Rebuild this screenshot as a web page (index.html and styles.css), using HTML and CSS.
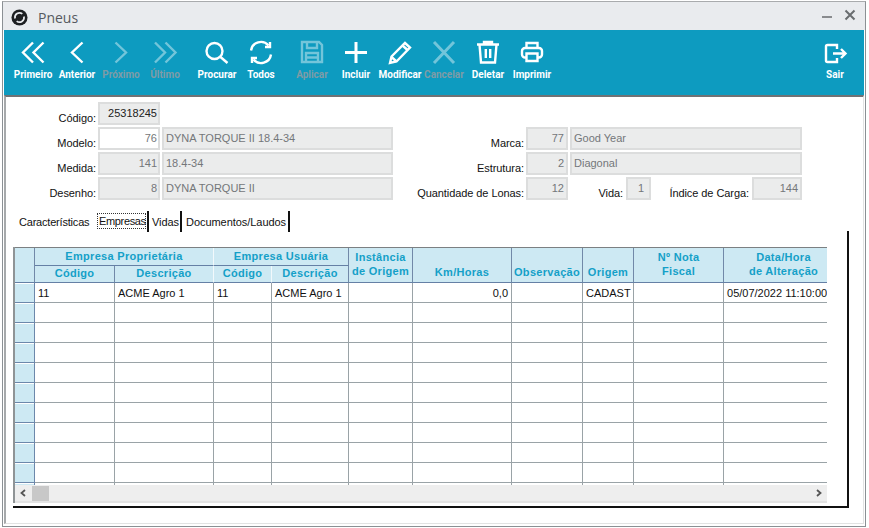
FILE: index.html
```html
<!DOCTYPE html>
<html lang="pt">
<head>
<meta charset="utf-8">
<title>Pneus</title>
<link rel="stylesheet" href="styles.css">
</head>
<body>
<div class="window">
  <header class="titlebar">
    <svg class="logo" viewBox="0 0 18 18"><circle cx="9" cy="9" r="8.5" fill="#1d1f22"/><path d="M4.300 10a4.800 4.800 0 0 1 7.700-4.800" fill="none" stroke="#e9ebee" stroke-width="1.800"/><path d="M13.700 8a4.800 4.800 0 0 1-7.700 4.800" fill="none" stroke="#e9ebee" stroke-width="1.800"/></svg>
    <span class="title">Pneus</span>
    <span class="winbtns">
      <svg class="winbtn" viewBox="0 0 12 12"><path d="M1 8h10" stroke="#707375" stroke-width="1.600"/></svg>
      <svg class="winbtn" viewBox="0 0 12 12"><path d="M1.500 1.500l9 9M10.500 1.500l-9 9" stroke="#6a6d70" stroke-width="2"/></svg>
    </span>
  </header>

  <nav class="toolbar">
    <div class="tool"><svg viewBox="0 0 24 24"><path d="M12 2.500L2 12.500l10 10M22.500 2.500l-10 10 10 10"/></svg><span>Primeiro</span></div>
    <div class="tool"><svg viewBox="0 0 24 24"><path d="M17.500 2.500L7 12.500l10.500 10"/></svg><span>Anterior</span></div>
    <div class="tool off"><svg viewBox="0 0 24 24"><path d="M6.500 2.500L17 12.500l-10.500 10"/></svg><span>Próximo</span></div>
    <div class="tool off gap-r"><svg viewBox="0 0 24 24"><path d="M2 2.500l10 10-10 10M12.500 2.500l10 10-10 10"/></svg><span>Último</span></div>
    <div class="tool"><svg viewBox="0 0 24 24"><circle cx="9.500" cy="11" r="8"/><path d="M15.500 17l7 6"/></svg><span>Procurar</span></div>
    <div class="tool gap-r2"><svg viewBox="0 0 24 24"><path d="M2 10.500a10 10 0 0 1 17.500-5M22 14.500a10 10 0 0 1-17.500 5"/><path d="M21 2v5h-5M3 23v-5h5"/></svg><span>Todos</span></div>
    <div class="tool off"><svg viewBox="0 0 24 24"><path d="M2 2h17l3 3v17H2z"/><path d="M7 2v6h10V2M6 22v-9h12v9M6 17.500h12"/></svg><span>Aplicar</span></div>
    <div class="tool"><svg viewBox="0 0 24 24"><path class="thick" d="M12 2v21M1 12.500h22"/></svg><span>Incluir</span></div>
    <div class="tool"><svg viewBox="0 0 24 24"><path d="M2 23l1.500-6.500L17 3l5 4.500L8.500 21.500z"/><path d="M14.500 5.500l5 4.500M3.500 17l5 4.500"/></svg><span>Modificar</span></div>
    <div class="tool off"><svg viewBox="0 0 24 24"><path class="thick" d="M2 2l20 21M22 2L2 23"/></svg><span>Cancelar</span></div>
    <div class="tool"><svg viewBox="0 0 24 24"><path d="M1 4.500h22M8 4.500V2h8v2.500M3.500 4.500l1.500 18h14l1.500-18"/><path d="M9.800 9v9M14.200 9v9"/></svg><span>Deletar</span></div>
    <div class="tool"><svg viewBox="0 0 24 24"><path d="M6.500 8V3h11v5"/><path d="M6.500 17.500H5a3 3 0 0 1-3-3V11a3 3 0 0 1 3-3h14a3 3 0 0 1 3 3v3.500a3 3 0 0 1-3 3h-1.500"/><path d="M6.500 13.500h11v7.500h-11z"/></svg><span>Imprimir</span></div>
    <div class="tool end"><svg viewBox="0 0 24 24"><path d="M14 9V5H4.500a1.500 1.500 0 0 0-1.500 1.500v14A1.500 1.500 0 0 0 4.500 22H14v-4"/><path d="M10 13.500h12M18 9l4.500 4.500L18 18"/></svg><span>Sair</span></div>
  </nav>

  <main class="content">
    <section class="form">
      <div class="formcol">
        <div class="row"><label class="lbl lbl-left">Código:</label><div class="fld code dark">25318245</div></div>
        <div class="row"><label class="lbl lbl-left">Modelo:</label><div class="fld code on">76</div><div class="fld name">DYNA TORQUE II 18.4-34</div></div>
        <div class="row"><label class="lbl lbl-left">Medida:</label><div class="fld code">141</div><div class="fld name">18.4-34</div></div>
        <div class="row"><label class="lbl lbl-left">Desenho:</label><div class="fld code">8</div><div class="fld name">DYNA TORQUE II</div></div>
      </div>
      <div class="formcol right">
        <div class="row"><label class="lbl lbl-right">Marca:</label><div class="fld code2">77</div><div class="fld name2">Good Year</div></div>
        <div class="row"><label class="lbl lbl-right">Estrutura:</label><div class="fld code2">2</div><div class="fld name2">Diagonal</div></div>
        <div class="row"><label class="lbl lbl-right">Quantidade de Lonas:</label><div class="fld code2">12</div><label class="lbl lbl-vida">Vida:</label><div class="fld vida">1</div><label class="lbl lbl-carga">Índice de Carga:</label><div class="fld carga">144</div></div>
      </div>
    </section>

    <div class="tabs">
      <span class="tab tab-first">Características</span>
      <span class="tab tab-active"><span class="focus">Empresas</span></span>
      <span class="tab tab-vidas">Vidas</span>
      <span class="tab tab-docs">Documentos/Laudos</span>
    </div>

    <section class="panel">
      <div class="grid">
        <div class="viewport">
          <table>
            <colgroup>
              <col class="c0"><col class="c1"><col class="c2"><col class="c3"><col class="c4"><col class="c5"><col class="c6"><col class="c7"><col class="c8"><col class="c9"><col class="c10">
            </colgroup>
            <thead>
              <tr class="h1">
                <th rowspan="2" class="hd-corner"></th>
                <th colspan="2" class="soft">Empresa Proprietária</th>
                <th colspan="2">Empresa Usuária</th>
                <th rowspan="2" class="two">Instância<br>de Origem</th>
                <th rowspan="2" class="low">Km/Horas</th>
                <th rowspan="2" class="low">Observação</th>
                <th rowspan="2" class="low">Origem</th>
                <th rowspan="2" class="two">Nº Nota<br>Fiscal</th>
                <th rowspan="2" class="two">Data/Hora<br>de Alteração</th>
              </tr>
              <tr class="h2">
                <th>Código</th><th class="soft">Descrição</th><th class="soft">Código</th><th>Descrição</th>
              </tr>
            </thead>
            <tbody>
              <tr><th></th><td>11</td><td>ACME Agro 1</td><td>11</td><td>ACME Agro 1</td><td></td><td class="num">0,0</td><td></td><td>CADAST</td><td></td><td>05/07/2022 11:10:00</td></tr>
              <tr><th></th><td></td><td></td><td></td><td></td><td></td><td></td><td></td><td></td><td></td><td></td></tr>
              <tr><th></th><td></td><td></td><td></td><td></td><td></td><td></td><td></td><td></td><td></td><td></td></tr>
              <tr><th></th><td></td><td></td><td></td><td></td><td></td><td></td><td></td><td></td><td></td><td></td></tr>
              <tr><th></th><td></td><td></td><td></td><td></td><td></td><td></td><td></td><td></td><td></td><td></td></tr>
              <tr><th></th><td></td><td></td><td></td><td></td><td></td><td></td><td></td><td></td><td></td><td></td></tr>
              <tr><th></th><td></td><td></td><td></td><td></td><td></td><td></td><td></td><td></td><td></td><td></td></tr>
              <tr><th></th><td></td><td></td><td></td><td></td><td></td><td></td><td></td><td></td><td></td><td></td></tr>
              <tr><th></th><td></td><td></td><td></td><td></td><td></td><td></td><td></td><td></td><td></td><td></td></tr>
              <tr><th></th><td></td><td></td><td></td><td></td><td></td><td></td><td></td><td></td><td></td><td></td></tr>
              <tr><th></th><td></td><td></td><td></td><td></td><td></td><td></td><td></td><td></td><td></td><td></td></tr>
            </tbody>
          </table>
        </div>
        <div class="hscroll">
          <svg class="arrow" viewBox="0 0 8 8"><path d="M6 1L2.500 4 6 7" fill="none" stroke="#555" stroke-width="1.800"/></svg>
          <span class="thumb"></span>
          <svg class="arrow arrow-r" viewBox="0 0 8 8"><path d="M2 1l3.500 3L2 7" fill="none" stroke="#555" stroke-width="1.800"/></svg>
        </div>
      </div>
    </section>
  </main>
</div>
</body>
</html>
```

FILE: styles.css
```css
* { box-sizing: border-box; }
html, body { margin: 0; padding: 0; background: #fff; }
body { width: 869px; height: 528px; overflow: hidden; padding: 1px 3px 1px 2px; }
.window {
  width: 864px; height: 526px;
  border: 1px solid #8b9094;
  border-top-color: #a9abad;
  display: flex; flex-direction: column;
  background: #fff;
  padding-bottom: 2px;
}
.titlebar {
  height: 28px; flex: none;
  background: #e9ebee;
  display: flex; align-items: center;
  padding-left: 8px; padding-right: 9px;
}
.logo { width: 17px; height: 17px; margin-top: 2px; }
.title { font: 14px "Open Sans", sans-serif; color: #555a60; margin-left: 10px; margin-top: 3px; }
.winbtns { margin-left: auto; display: flex; gap: 11px; margin-top: -2px; }
.winbtn { width: 12px; height: 12px; }

.toolbar {
  height: 65px; flex: none;
  margin-left: 1px; margin-right: 1px;
  background: #0d9bc0;
  display: flex;
  padding: 10px 7px 0 7px;
}
.tool { width: 44px; display: flex; flex-direction: column; align-items: center; }
.tool svg { width: 24px; height: 24px; fill: none; stroke: #fff; stroke-width: 2.400; overflow: visible; }
.tool .thick { stroke-width: 3; }
.tool span {
  font: bold 10px Roboto, sans-serif; color: #fff;
  margin-top: 5px; white-space: nowrap; line-height: 12px;
}
.tool.off svg { opacity: .42; }
.tool.off span { color: #7f9ba6; }
.gap-r { margin-right: 8px; }
.gap-r2 { margin-right: 7px; }
.end { margin-left: auto; }

.content {
  flex: 1; position: relative;
  margin-left: 1px; margin-right: 1px;
  border-top: 2px solid #6f7275;
  border-left: 2px solid #a6a9ab;
  border-right: 1px solid #e2e3e3;
  border-bottom: 1px solid #e2e3e3;
  font: 11px "Liberation Sans", sans-serif; color: #111;
  padding-top: 5px;
}

.form { display: flex; height: 100px; padding-left: 1px; }
.formcol { display: flex; flex-direction: column; gap: 2px; }
.formcol.right { margin-top: 25px; margin-left: 2px; }
.row { display: flex; height: 23px; gap: 2px; }
.lbl { align-self: flex-end; text-align: right; white-space: nowrap; line-height: 15px; margin-bottom: -1px; letter-spacing: -.07px; }
.lbl-left { width: 89px; }
.lbl-right { width: 129px; }
.lbl-vida { width: 53px; }
.lbl-carga { width: 96px; }
.fld {
  border: 2px solid #dcdddd;
  background: #ebecec;
  color: #74777a;
  font-size: 11px;
  line-height: 15px;
  padding: 2px 2px 0;
  white-space: nowrap;
}
.code { width: 62px; text-align: right; padding-right: 1px; }
.code2 { width: 42px; text-align: right; }
.name { width: 231px; }
.name2 { width: 232px; }
.vida { width: 25px; text-align: right; margin-left: 1px; padding-right: 5px; }
.carga { width: 50px; text-align: right; margin-left: 1px; }
.dark { color: #222; }
.on { background: #fff; }

.tabs { display: flex; height: 21px; padding-left: 13px; margin-top: 9px; align-items: stretch; font-size: 11px; letter-spacing: -.05px; }
.tab { line-height: 22px; white-space: nowrap; }
.tab-first { width: 78px; letter-spacing: -.2px; }
.tab-active { width: 52px; border-right: 2px solid #111; }
.focus { border: 1px dotted #333; padding: 0 1px; display: inline-block; width: 49px; line-height: 14px; height: 16px; margin-top: 2px; vertical-align: top; letter-spacing: -.35px; }
.tab-vidas { padding-left: 3px; width: 33px; border-right: 2px solid #111; }
.tab-docs { padding-left: 4px; width: 108px; border-right: 2px solid #111; }

.panel {
  position: absolute; left: 7px; top: 134px;
  width: 836px; height: 277px;
  border-right: 2px solid #111;
  border-bottom: 2px solid #111;
  padding-top: 16px;
}
.grid { width: 814px; border-left: 2px solid #8f9496; }
.viewport { height: 238px; overflow: hidden; border-top: 1px solid #7c8082; }
table { border-collapse: separate; border-spacing: 0; table-layout: fixed; width: 829px; }
.c0 { width: 20px; } .c1 { width: 80px; } .c2 { width: 99px; } .c3 { width: 58px; } .c4 { width: 77px; }
.c5 { width: 64px; } .c6 { width: 99px; } .c7 { width: 71px; } .c8 { width: 51px; } .c9 { width: 90px; } .c10 { width: 120px; }
th, td { padding: 0; overflow: hidden; white-space: nowrap; }
thead th {
  background: #cde9f3; color: #14a0c8;
  font: bold 11px "Liberation Sans", sans-serif;
  letter-spacing: .3px; line-height: 14px;
  border-right: 1px solid #7189a8;
  border-bottom: 1px solid #6580a5;
  text-align: center;
}
thead th.soft { border-right-color: #f2f9fc; }
.h2 th:nth-child(3) { border-right-color: #f2f9fc; }
.h1 th { height: 18px; padding-bottom: 2px; }
.h2 th { height: 17px; padding-bottom: 2px; }
.h1 th.low { vertical-align: bottom; padding-bottom: 3px; }
.h1 th.two { vertical-align: top; padding-top: 2px; padding-bottom: 0; }
tbody th { background: #cde9f3; border-right: 1px solid #6c88ab; border-bottom: 1px solid #6c88ab; box-shadow: inset 0 1px 0 #fff; height: 20px; }
td {
  height: 20px;
  border-right: 1px solid #9aa3a7;
  border-bottom: 1px solid #9aa3a7;
  padding-left: 3px; padding-right: 3px;
  font-size: 11px; color: #111;
}
td:last-child { padding-right: 0; }
td.num { text-align: right; padding-right: 3px; }
.hscroll {
  height: 18px; background: #eee;
  border-bottom: 2px solid #e3e3e3;
  display: flex; align-items: center;
  padding-left: 4px; padding-right: 4px;
}
.arrow { width: 8px; height: 8px; }
.thumb { width: 17px; height: 15px; background: #c8c8c8; margin-left: 5px; }
.arrow-r { margin-left: auto; }
```
